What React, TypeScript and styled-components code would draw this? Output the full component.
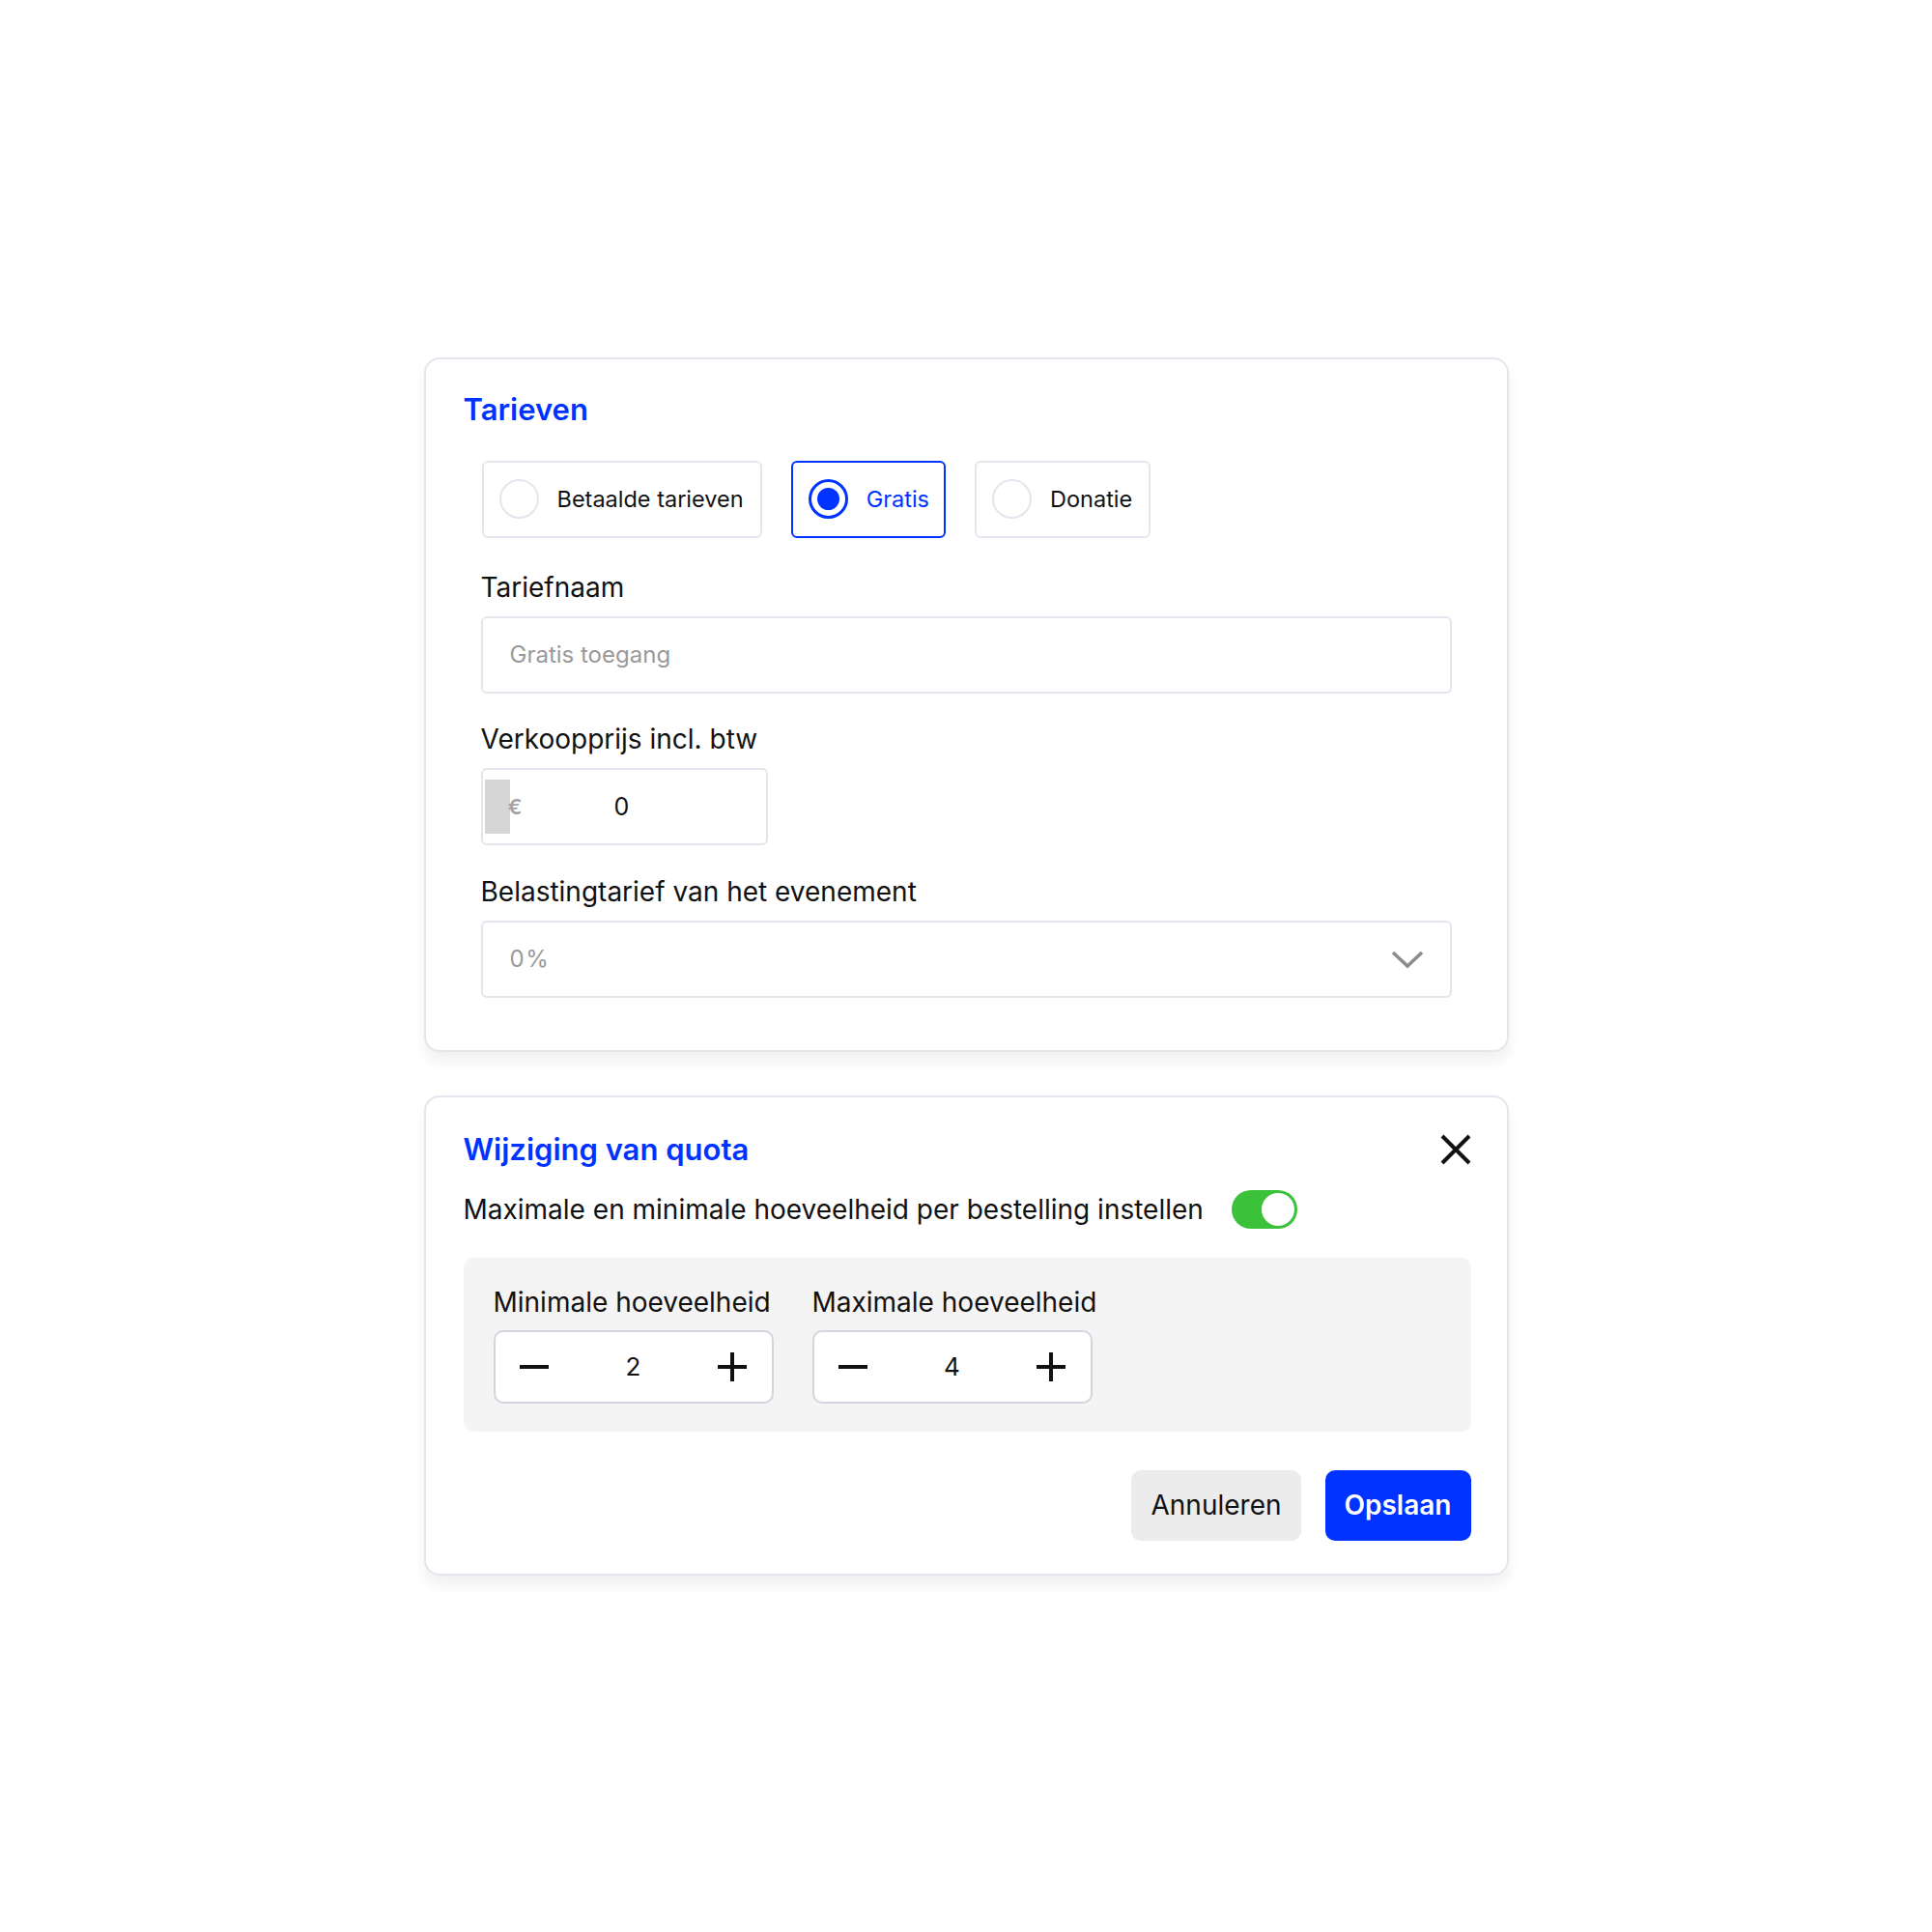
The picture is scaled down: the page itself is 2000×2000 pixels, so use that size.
import styled, { createGlobalStyle } from 'styled-components';

const GlobalStyle = createGlobalStyle`
  html, body {
    margin: 0;
    padding: 0;
    background: #ffffff;
  }

  body {
    font-family: Inter, 'Noto Sans', sans-serif;
    color: #111111;
  }
`;

const blue = '#0033ff';
const border = '#e3e6ec';

const StyledPage = styled.div`
  display: flex;
  flex-direction: column;
  align-items: center;
  justify-content: center;
  gap: 45px;

  min-height: 2000px;
`;

const StyledCard = styled.section`
  box-sizing: border-box;
  width: 1123px;
  padding: 32px 57px 54px 39px;

  background: #ffffff;
  border: 2px solid ${border};
  border-radius: 16px;
  box-shadow: 0 10px 14px rgba(0, 0, 0, 0.06);
`;

const StyledQuotaCard = styled(StyledCard)`
  padding: 34px 37px 34px 39px;
`;

const StyledTitle = styled.h2`
  margin: 0;

  font-size: 31px;
  font-weight: 600;
  line-height: 40px;
  color: ${blue};
`;

const StyledHeader = styled.div`
  display: flex;
  align-items: center;
  justify-content: space-between;
`;

const StyledRadioGroup = styled.div`
  display: flex;
  gap: 30px;

  margin: 33px 0 0 19px;
`;

const StyledRadioCard = styled.label<{ $checked?: boolean }>`
  box-sizing: border-box;
  display: flex;
  align-items: center;
  gap: 19px;

  height: 80px;
  padding: 0 ${({ $checked }) => ($checked ? 15 : 17)}px 0 16px;

  border: 2px solid ${({ $checked }) => ($checked ? blue : border)};
  border-radius: 6px;

  font-size: 23.5px;
  color: ${({ $checked }) => ($checked ? blue : '#111111')};
  cursor: pointer;
`;

const StyledRadioDot = styled.span<{ $checked?: boolean }>`
  box-sizing: border-box;
  display: flex;
  align-items: center;
  justify-content: center;

  width: 41px;
  height: 41px;

  border: ${({ $checked }) => ($checked ? `3px solid ${blue}` : `2px solid ${border}`)};
  border-radius: 50%;

  &::after {
    content: '';
    display: ${({ $checked }) => ($checked ? 'block' : 'none')};
    width: 23px;
    height: 23px;
    border-radius: 50%;
    background: ${blue};
  }
`;

const StyledFields = styled.div`
  display: flex;
  flex-direction: column;

  margin: 34px 0 0 18px;
`;

const StyledLabel = styled.div`
  margin: 0 0 13px;

  font-size: 28px;
  line-height: 34px;
`;

const StyledInput = styled.div<{ $width?: number }>`
  box-sizing: border-box;
  display: flex;
  align-items: center;

  width: ${({ $width }) => ($width ? `${$width}px` : '100%')};
  height: 80px;
  margin-bottom: 30px;
  padding: 0 28px;

  border: 2px solid ${border};
  border-radius: 6px;

  font-size: 24px;
  color: #999999;
`;

const StyledPriceInput = styled(StyledInput)`
  padding: 0 0 0 2px;
  margin-bottom: 31px;
`;

const StyledCurrency = styled.span`
  display: flex;
  align-items: center;

  width: 27px;
  height: 56px;

  background: linear-gradient(to right, #d6d6d6 26px, transparent 26px);

  font-size: 22px;
  font-weight: 600;
  color: #a3a3a3;
`;

const StyledCurrencySign = styled.span`
  margin-left: 24px;
`;

const StyledPriceValue = styled.span`
  flex: 1;
  padding-right: 34px;

  font-size: 25px;
  text-align: center;
  color: #111111;
`;

const StyledSelect = styled(StyledInput)`
  justify-content: space-between;
  margin-bottom: 0;
  padding-right: 27px;

  letter-spacing: 1.5px;
`;

const StyledToggleRow = styled.div`
  display: flex;
  align-items: center;
  gap: 29px;

  margin-top: 22px;

  font-size: 28px;
`;

const StyledSwitch = styled.span<{ $on?: boolean }>`
  box-sizing: border-box;
  display: flex;
  justify-content: ${({ $on }) => ($on ? 'flex-end' : 'flex-start')};
  align-items: center;

  width: 68px;
  height: 40px;
  padding: 3px;

  background: ${({ $on }) => ($on ? '#3cc13b' : '#cccccc')};
  border-radius: 20px;

  &::after {
    content: '';
    width: 34px;
    height: 34px;
    border-radius: 50%;
    background: #ffffff;
  }
`;

const StyledPanel = styled.div`
  display: flex;
  gap: 40px;

  margin-top: 30px;
  padding: 29px 31px 29px;

  background: #f4f4f4;
  border-radius: 10px;
`;

const StyledQuantity = styled.div`
  display: flex;
  flex-direction: column;
  gap: 12px;

  font-size: 28px;
`;

const StyledStepper = styled.div`
  box-sizing: border-box;
  display: flex;
  align-items: center;
  justify-content: space-between;

  width: 290px;
  height: 76px;
  padding: 0 24px;

  background: #ffffff;
  border: 2px solid #d3d5de;
  border-radius: 10px;

  font-size: 26px;
`;

const StyledStepButton = styled.button`
  display: flex;
  padding: 0;

  background: none;
  border: none;
  cursor: pointer;
`;

const StyledActions = styled.div`
  display: flex;
  justify-content: flex-end;
  gap: 25px;

  margin-top: 40px;
`;

const StyledButton = styled.button<{ $primary?: boolean }>`
  height: 73px;
  padding: 0 20px;

  border: none;
  border-radius: 10px;
  background: ${({ $primary }) => ($primary ? blue : '#ececec')};

  font-family: Inter, sans-serif;
  font-size: 28px;
  font-weight: ${({ $primary }) => ($primary ? 600 : 400)};
  color: ${({ $primary }) => ($primary ? '#ffffff' : '#111111')};
  cursor: pointer;
`;

const StyledClose = styled.button`
  display: flex;
  padding: 0;

  background: none;
  border: none;
  cursor: pointer;
`;

function Minus() {
  return (
    <svg width="32" height="32" viewBox="0 0 32 32">
      <path d="M1 16h30" stroke="#111" strokeWidth="4" />
    </svg>
  );
}

function Plus() {
  return (
    <svg width="32" height="32" viewBox="0 0 32 32">
      <path d="M1 16h30M16 1v30" stroke="#111" strokeWidth="4" />
    </svg>
  );
}

function Stepper({ value }: { value: number }) {
  return (
    <StyledStepper>
      <StyledStepButton aria-label="minder">
        <Minus />
      </StyledStepButton>
      <span>{value}</span>
      <StyledStepButton aria-label="meer">
        <Plus />
      </StyledStepButton>
    </StyledStepper>
  );
}

const options = [
  { label: 'Betaalde tarieven', checked: false },
  { label: 'Gratis', checked: true },
  { label: 'Donatie', checked: false },
];

export default function App() {
  return (
    <>
      <GlobalStyle />
      <StyledPage>
        <StyledCard>
          <StyledTitle>Tarieven</StyledTitle>
          <StyledRadioGroup>
            {options.map(({ label, checked }) => (
              <StyledRadioCard key={label} $checked={checked}>
                <StyledRadioDot $checked={checked} />
                {label}
              </StyledRadioCard>
            ))}
          </StyledRadioGroup>

          <StyledFields>
            <StyledLabel>Tariefnaam</StyledLabel>
            <StyledInput>Gratis toegang</StyledInput>

            <StyledLabel>Verkoopprijs incl. btw</StyledLabel>
            <StyledPriceInput $width={297}>
              <StyledCurrency>
                <StyledCurrencySign>€</StyledCurrencySign>
              </StyledCurrency>
              <StyledPriceValue>0</StyledPriceValue>
            </StyledPriceInput>

            <StyledLabel>Belastingtarief van het evenement</StyledLabel>
            <StyledSelect>
              <span>0%</span>
              <svg width="34" height="20" viewBox="0 0 34 20">
                <path d="M2 3l15 14L32 3" fill="none" stroke="#8c8c8c" strokeWidth="3.5" />
              </svg>
            </StyledSelect>
          </StyledFields>
        </StyledCard>

        <StyledQuotaCard>
          <StyledHeader>
            <StyledTitle>Wijziging van quota</StyledTitle>
            <StyledClose aria-label="Sluiten">
              <svg width="32" height="32" viewBox="0 0 32 32">
                <path d="M2 2l28 28M30 2L2 30" stroke="#111" strokeWidth="4" />
              </svg>
            </StyledClose>
          </StyledHeader>

          <StyledToggleRow>
            Maximale en minimale hoeveelheid per bestelling instellen
            <StyledSwitch $on />
          </StyledToggleRow>

          <StyledPanel>
            <StyledQuantity>
              Minimale hoeveelheid
              <Stepper value={2} />
            </StyledQuantity>
            <StyledQuantity>
              Maximale hoeveelheid
              <Stepper value={4} />
            </StyledQuantity>
          </StyledPanel>

          <StyledActions>
            <StyledButton>Annuleren</StyledButton>
            <StyledButton $primary>Opslaan</StyledButton>
          </StyledActions>
        </StyledQuotaCard>
      </StyledPage>
    </>
  );
}
